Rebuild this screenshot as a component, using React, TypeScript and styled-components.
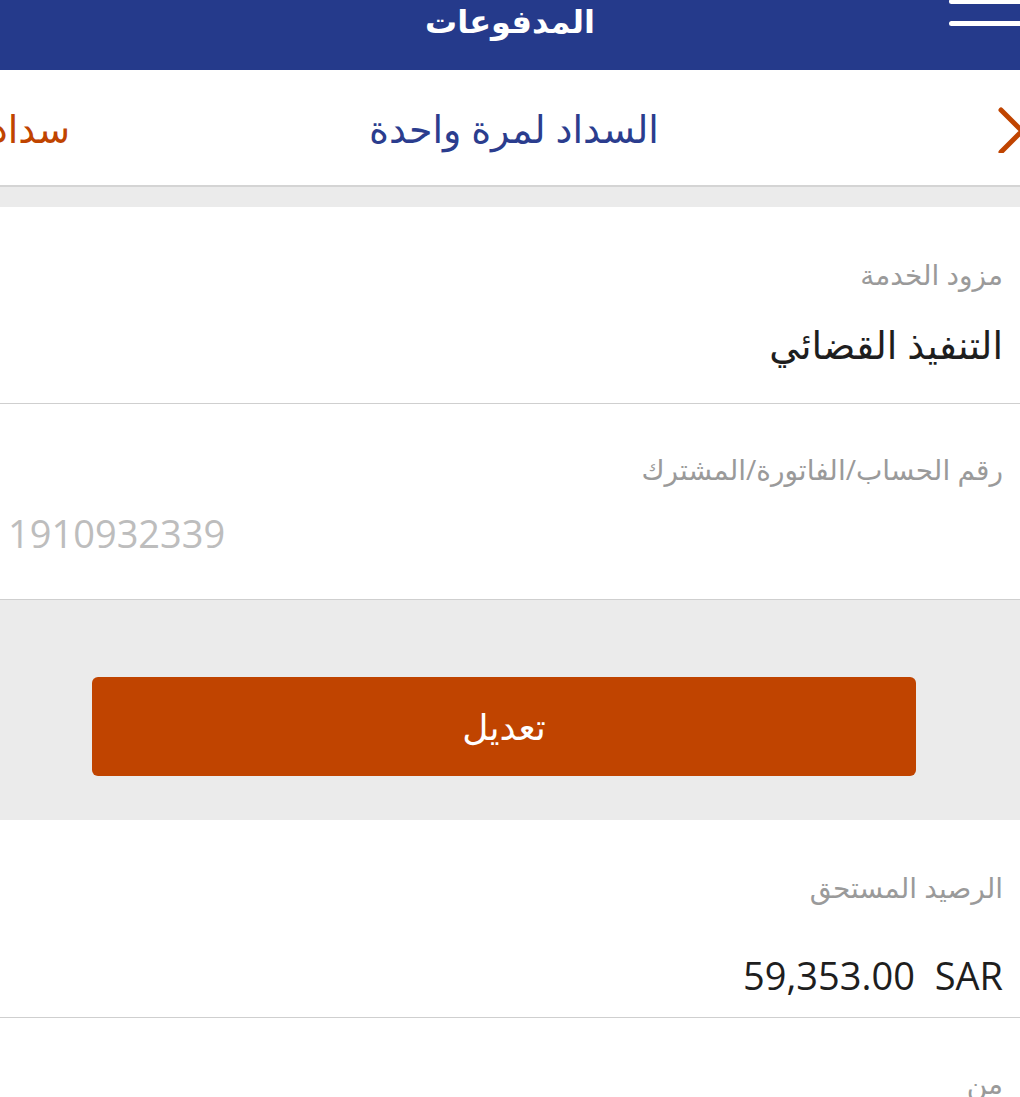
import * as React from 'react';
import styled, { createGlobalStyle } from 'styled-components';

const GlobalStyle = createGlobalStyle`
  html, body {
    margin: 0;
    padding: 0;
    background: #ffffff;
    overflow: hidden;
  }
  body {
    font-family: "Open Sans", "DejaVu Sans", sans-serif;
  }
`;

const Page = styled.div`
  direction: rtl;
  width: 1020px;
  height: 1097px;
  overflow: hidden;
  display: flex;
  flex-direction: column;
`;

const Header = styled.header`
  position: relative;
  height: 70px;
  flex: none;
  background: #253a8b;
  display: flex;
  justify-content: center;
  align-items: flex-start;
  overflow: hidden;
`;

const HeaderTitle = styled.h1`
  margin: 0;
  line-height: 42px;
  font-size: 32px;
  font-weight: bold;
  color: #ffffff;
`;

const Burger = styled.div`
  position: absolute;
  right: 0;
  top: -23px;
  width: 71px;
  display: flex;
  flex-direction: column;
  gap: 17px;
  & > span {
    display: block;
    height: 5px;
    border-radius: 3px 0 0 3px;
    background: #ffffff;
  }
`;

const TabBar = styled.nav`
  height: 115px;
  flex: none;
  background: #ffffff;
  border-bottom: 2px solid #d4d4d4;
  display: flex;
  align-items: center;
  overflow: hidden;
`;

const Chevron = styled.svg`
  flex: none;
  width: 22px;
  height: 46px;
  margin-top: 4px;
`;

const ActiveTab = styled.div`
  flex: 1;
  text-align: center;
  font-size: 38px;
  color: #2b3d8e;
  padding-right: 40px;
`;

const NextTab = styled.div`
  flex: none;
  width: 70px;
  font-size: 38px;
  color: #c04400;
  white-space: nowrap;
`;

const Band = styled.div<{ $h: number }>`
  height: ${({ $h }) => $h}px;
  flex: none;
  background: #ebebeb;
`;

const Field = styled.section<{ $top: number; $gap: number; $h: number }>`
  height: ${({ $h }) => $h}px;
  flex: none;
  box-sizing: border-box;
  padding: ${({ $top }) => $top}px 17px 0 8px;
  border-bottom: 1px solid #cfcfcf;
  display: flex;
  flex-direction: column;
  gap: ${({ $gap }) => $gap}px;
  background: #ffffff;
`;

const Label = styled.div`
  font-size: 28px;
  line-height: 38px;
  color: #9a9a9a;
`;

const Value = styled.div<{ $muted?: boolean; $ltr?: boolean; $align?: 'left' | 'right' }>`
  font-size: 38px;
  line-height: 50px;
  color: ${({ $muted }) => ($muted ? '#bdbdbd' : '#1e1e1e')};
  direction: ${({ $ltr }) => ($ltr ? 'ltr' : 'rtl')};
  text-align: ${({ $align }) => $align ?? 'right'};
  white-space: pre;
`;

const ActionArea = styled.div`
  height: 220px;
  flex: none;
  box-sizing: border-box;
  background: #ebebeb;
  padding: 77px 104px 0 92px;
`;

const Button = styled.button`
  width: 100%;
  height: 99px;
  border: none;
  border-radius: 6px;
  background: #c04400;
  color: #ffffff;
  font-family: inherit;
  font-size: 36px;
  cursor: pointer;
`;

export default function App() {
  return (
    <>
      <GlobalStyle />
      <Page>
        <Header>
          <HeaderTitle>المدفوعات</HeaderTitle>
          <Burger>
            <span />
            <span />
            <span />
          </Burger>
        </Header>
        <TabBar>
          <Chevron viewBox="0 0 22 46">
            <path d="M3 3 L24 24 L3 45" fill="none" stroke="#c04400" strokeWidth="5" strokeLinecap="round" strokeLinejoin="round" />
          </Chevron>
          <ActiveTab>السداد لمرة واحدة</ActiveTab>
          <NextTab>سداد</NextTab>
        </TabBar>
        <Band $h={20} />
        <Field $h={197} $top={48} $gap={26}>
          <Label>مزود الخدمة</Label>
          <Value>التنفيذ القضائي</Value>
        </Field>
        <Field $h={196} $top={46} $gap={20}>
          <Label>رقم الحساب/الفاتورة/المشترك</Label>
          <Value $muted $ltr $align="left">1910932339</Value>
        </Field>
        <ActionArea>
          <Button>تعديل</Button>
        </ActionArea>
        <Field $h={198} $top={48} $gap={44}>
          <Label>الرصيد المستحق</Label>
          <Value $ltr $align="right">59,353.00  SAR</Value>
        </Field>
        <Field $h={120} $top={46} $gap={20}>
          <Label>من</Label>
        </Field>
      </Page>
    </>
  );
}
